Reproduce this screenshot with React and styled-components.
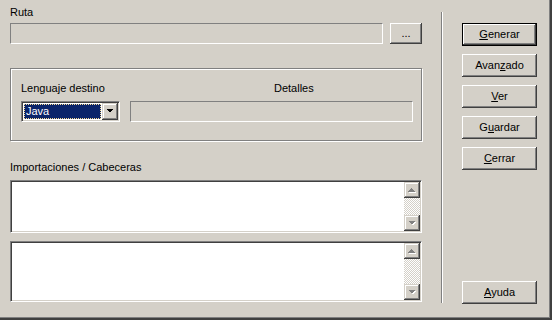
import React from "react";
import styled, { createGlobalStyle } from "styled-components";

const GlobalStyle = createGlobalStyle`
  html, body {
    margin: 0;
    padding: 0;
    background: #d4d0c8;
  }
  body {
    font-family: "Liberation Sans", Arial, sans-serif;
    font-size: 11px;
    color: #000;
  }
`;

const Window = styled.div`
  width: 552px;
  height: 320px;
  box-sizing: border-box;
  display: flex;
  padding-left: 10px;
  background: #d4d0c8;
  box-shadow: inset -1px -1px 0 #404040, inset -2px -2px 0 #404040,
    inset -3px -3px 0 #808080;
`;

const LeftCol = styled.div`
  width: 412px;
  display: flex;
  flex-direction: column;
  padding-top: 6px;
`;

const Label = styled.div`
  line-height: 13px;
  height: 13px;
  white-space: nowrap;
  margin-top: ${(props) => props.$top || "0px"};
  padding-left: ${(props) => props.$indent || "0px"};
`;

const PathRow = styled.div`
  display: flex;
  gap: 7px;
  margin-top: 4px;
  height: 21px;
`;

const FlatField = styled.div`
  flex: ${(props) => (props.$grow ? "1" : "none")};
  height: 21px;
  box-sizing: border-box;
  border: 1px solid;
  border-color: #808080 #fff #fff #808080;
  background: #d4d0c8;
`;

const Button = styled.button`
  width: ${(props) => props.$w || "75px"};
  height: ${(props) => props.$h || "23px"};
  flex: none;
  padding: 0;
  border: none;
  background: #d4d0c8;
  font-family: inherit;
  font-size: 11px;
  color: #000;
  line-height: 13px;
  margin-top: ${(props) => (props.$bottom ? "auto" : "0")};
  box-shadow: ${(props) =>
    props.$default
      ? "inset 0 0 0 1px #000, inset -2px -2px 0 #404040, inset 2px 2px 0 #fff, inset -3px -3px 0 #808080"
      : "inset -1px -1px 0 #404040, inset 1px 1px 0 #fff, inset -2px -2px 0 #808080"};
`;

const Key = styled.span`
  text-decoration: underline;
  text-underline-offset: 1px;
`;

const GroupBox = styled.div`
  width: 412px;
  height: 73px;
  box-sizing: border-box;
  margin-top: 24px;
  border: 1px solid #808080;
  box-shadow: inset 1px 1px 0 #fff, 1px 1px 0 #fff;
  display: flex;
  gap: 10px;
  padding: 13px 8px 0 10px;
`;

const FieldCol = styled.div`
  display: flex;
  flex-direction: column;
  gap: 6px;
  width: ${(props) => props.$w || "auto"};
  flex: ${(props) => (props.$w ? "none" : "1")};
`;

const Combo = styled.div`
  height: 21px;
  box-sizing: border-box;
  border: 1px solid;
  border-color: #808080 #fff #fff #808080;
  box-shadow: inset 1px 1px 0 #404040, inset -1px -1px 0 #d4d0c8;
  padding: 1px;
  background: #fff;
  display: flex;
`;

const Selection = styled.div`
  flex: 1;
  margin: 1px;
  background: #0a246a;
  color: #fff;
  border: 1px dotted #f5db95;
  line-height: 13px;
  padding-left: 1px;
`;

const DropButton = styled.div`
  width: 16px;
  flex: none;
  background: #d4d0c8;
  display: flex;
  align-items: center;
  justify-content: center;
  box-shadow: inset -1px -1px 0 #404040, inset 1px 1px 0 #d4d0c8,
    inset -2px -2px 0 #808080, inset 2px 2px 0 #fff;
`;

const TextBox = styled.div`
  height: ${(props) => props.$h};
  box-sizing: border-box;
  margin-top: ${(props) => props.$top};
  border: 1px solid;
  border-color: #808080 #fff #fff #808080;
  box-shadow: inset 1px 1px 0 #404040, inset -1px -1px 0 #d4d0c8;
  padding: 1px;
  background: #fff;
  display: flex;
`;

const TextContent = styled.div`
  flex: 1;
`;

const ScrollBar = styled.div`
  width: 16px;
  display: flex;
  flex-direction: column;
`;

const ScrollButton = styled.div`
  height: 16px;
  flex: none;
  background: #d4d0c8;
  display: flex;
  align-items: center;
  justify-content: center;
  box-shadow: inset -1px -1px 0 #404040, inset 1px 1px 0 #d4d0c8,
    inset -2px -2px 0 #808080, inset 2px 2px 0 #fff;
`;

const Track = styled.div`
  flex: 1;
  background-image: conic-gradient(
    #fff 25%,
    #d4d0c8 0 50%,
    #fff 0 75%,
    #d4d0c8 0
  );
  background-size: 2px 2px;
`;

const Separator = styled.div`
  width: 1px;
  height: 291px;
  margin: 12px 19px 0 19px;
  background: #808080;
  border-right: 1px solid #fff;
`;

const RightCol = styled.div`
  width: 75px;
  height: 304px;
  box-sizing: border-box;
  padding-top: 23px;
  display: flex;
  flex-direction: column;
  gap: 8px;
`;

function Arrow({ up, disabled }) {
  const pts = up ? "3.5,0 7,3.5 0,3.5" : "0,0 7,0 3.5,3.5";
  return (
    <svg width="8" height="5" viewBox="0 0 8 5" shapeRendering="crispEdges">
      {disabled && (
        <polygon points={pts} fill="#fff" transform="translate(1,1)" />
      )}
      <polygon points={pts} fill={disabled ? "#808080" : "#000"} />
    </svg>
  );
}

function ScrollArea({ h, top }) {
  return (
    <TextBox $h={h} $top={top}>
      <TextContent />
      <ScrollBar>
        <ScrollButton>
          <Arrow up disabled />
        </ScrollButton>
        <Track />
        <ScrollButton>
          <Arrow disabled />
        </ScrollButton>
      </ScrollBar>
    </TextBox>
  );
}

export default function App() {
  return (
    <>
      <GlobalStyle />
      <Window>
        <LeftCol>
          <Label>Ruta</Label>
          <PathRow>
            <FlatField $grow />
            <Button $w="32px" $h="21px">
              ...
            </Button>
          </PathRow>

          <GroupBox>
            <FieldCol $w="99px">
              <Label>Lenguaje destino</Label>
              <Combo>
                <Selection>Java</Selection>
                <DropButton>
                  <Arrow />
                </DropButton>
              </Combo>
            </FieldCol>
            <FieldCol>
              <Label $indent="144px">Detalles</Label>
              <FlatField />
            </FieldCol>
          </GroupBox>

          <Label $top="20px">Importaciones / Cabeceras</Label>
          <ScrollArea h="53px" top="6px" />
          <ScrollArea h="61px" top="8px" />
        </LeftCol>

        <Separator />

        <RightCol>
          <Button $default>
            <Key>G</Key>enerar
          </Button>
          <Button>
            Avan<Key>z</Key>ado
          </Button>
          <Button>
            <Key>V</Key>er
          </Button>
          <Button>
            G<Key>u</Key>ardar
          </Button>
          <Button>
            <Key>C</Key>errar
          </Button>
          <Button $bottom>
            <Key>A</Key>yuda
          </Button>
        </RightCol>
      </Window>
    </>
  );
}
